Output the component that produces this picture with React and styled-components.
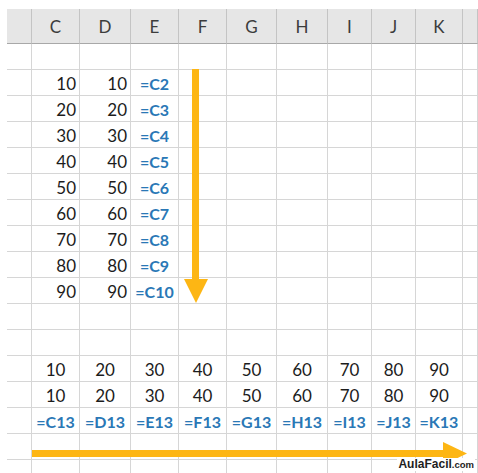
import React from 'react';
import styled, { createGlobalStyle } from 'styled-components';

const GlobalStyle = createGlobalStyle`
  html, body {
    margin: 0;
    padding: 0;
    background: #fff;
  }
`;

// column widths measured from the sheet, last one takes what's left
const columns = [
  { name: '', width: '25px' },
  { name: 'C', width: '48px' },
  { name: 'D', width: '51px' },
  { name: 'E', width: '48px' },
  { name: 'F', width: '48px' },
  { name: 'G', width: '50px' },
  { name: 'H', width: '51px' },
  { name: 'I', width: '44px' },
  { name: 'J', width: '44px' },
  { name: 'K', width: '47px' },
  { name: '', width: '1fr' },
];

const values = [10, 20, 30, 40, 50, 60, 70, 80, 90];
const letters = ['C', 'D', 'E', 'F', 'G', 'H', 'I', 'J', 'K'];

const empty = () => columns.map(() => null);

const buildRows = () => {
  const rows = [];
  rows.push(empty());
  values.forEach((v, i) => {
    const row = empty();
    row[1] = { text: v, align: 'right' };
    row[2] = { text: v, align: 'right' };
    row[3] = { text: `=C${i + 2}`, formula: true };
    rows.push(row);
  });
  rows.push(empty());
  rows.push(empty());
  for (let r = 0; r < 2; r++) {
    const row = empty();
    values.forEach((v, i) => { row[i + 1] = { text: v }; });
    rows.push(row);
  }
  const formulas = empty();
  letters.forEach((l, i) => { formulas[i + 1] = { text: `=${l}13`, formula: true }; });
  rows.push(formulas);
  rows.push(empty());
  rows.push(empty());
  return rows;
};

const Frame = styled.div`
  position: relative;
  width: 478px;
  height: 473px;
  overflow: hidden;
  background: #fff;
`;

const Sheet = styled.div`
  display: grid;
  grid-template-columns: ${({ $cols }) => $cols};
  padding: 9px 0 0 7px;
  font-family: Lato, "Liberation Sans", sans-serif;
`;

const HeadCell = styled.div`
  box-sizing: border-box;
  height: 35px;
  background: #e6e6e6;
  border-right: 1px solid #c4c4c4;
  border-bottom: 1px solid #a8a8a8;
  color: #3c3c3c;
  font-size: 17px;
  display: flex;
  align-items: center;
  justify-content: center;
  padding-top: 1px;
`;

const Cell = styled.div`
  box-sizing: border-box;
  height: 26px;
  border-right: 1px solid #d6d6d6;
  border-bottom: 1px solid #d6d6d6;
  display: flex;
  align-items: center;
  justify-content: ${({ $align }) => ($align === 'right' ? 'flex-end' : 'center')};
  padding: 1px ${({ $align }) => ($align === 'right' ? '3px' : '0')} 0 0;
  font-size: ${({ $formula }) => ($formula ? '16px' : '17px')};
  font-weight: ${({ $formula }) => ($formula ? 700 : 400)};
  color: ${({ $formula }) => ($formula ? '#2a78b6' : '#1c1c1c')};
  white-space: nowrap;
  overflow: visible;
`;

const Overlay = styled.svg`
  position: absolute;
  left: 0;
  top: 0;
  pointer-events: none;
`;

const Watermark = styled.div`
  position: absolute;
  right: 3px;
  bottom: 2px;
  background: #fff;
  padding: 0 1px;
  font-family: "Liberation Sans", Arial, sans-serif;
  font-weight: 700;
  font-size: 12px;
  line-height: 12px;
  color: #1e1e1e;

  span {
    font-size: 9.5px;
  }
`;

const ARROW = '#fdb614';

const Arrows = () => (
  <Overlay width='478' height='473' viewBox='0 0 478 473'>
    <rect x='192' y='69' width='7' height='211' fill={ ARROW } />
    <polygon points='184,279 208,279 196,303' fill={ ARROW } />
    <rect x='32' y='450' width='412' height='7' fill={ ARROW } />
    <polygon points='443,442 443,465 467,453.5' fill={ ARROW } />
  </Overlay>
);

const App = () => {
  const rows = buildRows();
  const cols = columns.map((c) => c.width).join(' ');
  return (
    <Frame>
      <GlobalStyle />
      <Sheet $cols={ cols }>
        { columns.map((c, i) => (
          <HeadCell key={ `h${i}` }>{ c.name }</HeadCell>
        )) }
        { rows.map((row, r) => row.map((cell, c) => (
          <Cell
            key={ `${r}-${c}` }
            $align={ cell && cell.align }
            $formula={ cell && cell.formula }
          >
            { cell ? cell.text : '' }
          </Cell>
        ))) }
      </Sheet>
      <Arrows />
      <Watermark>AulaFacil<span>.com</span></Watermark>
    </Frame>
  );
};

export default App;
